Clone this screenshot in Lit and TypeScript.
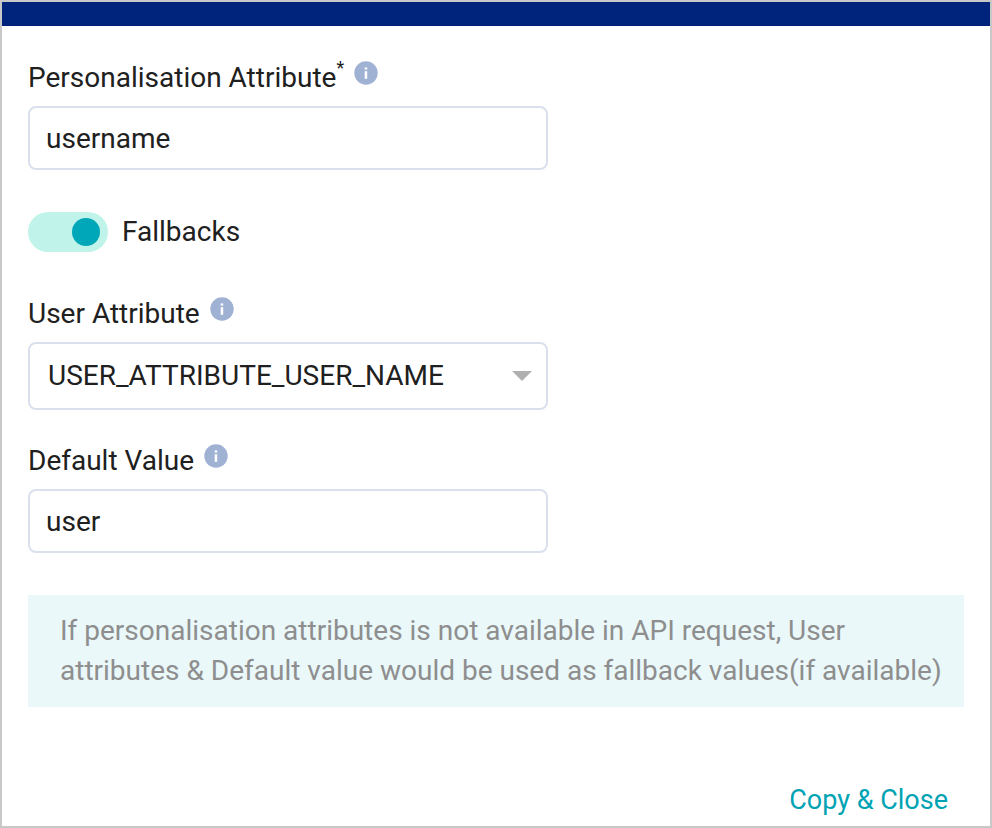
import { LitElement, html, css } from "lit";
import { customElement, property, state } from "lit/decorators.js";

@customElement("info-hint")
class InfoHint extends LitElement {
  @property() label = "";

  static styles = css`
    :host {
      display: block;
      height: 24px;
    }
    .hint {
      display: block;
      width: 24px;
      height: 24px;
      padding: 0;
      border: 0;
      background: none;
      cursor: pointer;
    }
    .icon {
      display: block;
    }
  `;

  render() {
    return html`
      <button class="hint" type="button" aria-label=${this.label}>
        <svg class="icon" width="24" height="24" viewBox="0 0 24 24" aria-hidden="true">
          <circle cx="12" cy="12" r="11.7" fill="#a0b2d4" />
          <rect x="10.7" y="6.4" width="2.5" height="2.2" fill="#fff" />
          <rect x="10.7" y="10.2" width="2.5" height="7.6" fill="#fff" />
        </svg>
      </button>
    `;
  }
}

@customElement("app-root")
class AppRoot extends LitElement {
  @state() private fallbacks = true;

  static styles = css`
    :host {
      display: flex;
      flex-direction: column;
      box-sizing: border-box;
      min-height: 100vh;
      border: 2px solid #c8c8c8;
      background: #fff;
      color: #202020;
      font-family: Roboto, "Liberation Sans", sans-serif;
      font-size: 28px;
      line-height: 40px;
    }
    .bar {
      height: 24px;
      background: #00237c;
    }
    .body {
      padding: 32px 26px 0;
    }
    .field {
      display: grid;
      gap: 8px;
      max-width: 520px;
    }
    .caption {
      display: flex;
      gap: 10px;
    }
    .caption info-hint {
      margin-top: 3px;
    }
    .star {
      font-size: 18px;
      line-height: 20px;
      vertical-align: top;
    }
    .control {
      box-sizing: border-box;
      width: 100%;
      height: 64px;
      margin: 0;
      padding: 0 16px;
      border: 2px solid #dbe0ef;
      border-radius: 8px;
      background: #fff;
      color: inherit;
      font: inherit;
      outline: none;
    }
    .picker {
      display: grid;
      align-items: center;
    }
    .picker > * {
      grid-area: 1 / 1;
    }
    .select {
      height: 68px;
      padding: 0 48px 0 18px;
      appearance: none;
    }
    .arrow {
      justify-self: end;
      margin-right: 16px;
      pointer-events: none;
    }
    .toggle {
      display: flex;
      align-items: center;
      gap: 14px;
      width: fit-content;
      margin: 42px 0;
    }
    .switch {
      display: flex;
      align-items: center;
      box-sizing: border-box;
      width: 80px;
      height: 40px;
      margin: 0;
      padding: 0 8px;
      border-radius: 20px;
      background: #e3e6ee;
      appearance: none;
    }
    .switch::before {
      content: "";
      width: 28px;
      height: 28px;
      border-radius: 50%;
      background: #98a0b3;
    }
    .switch:checked {
      justify-content: flex-end;
      background: #c0f3e9;
    }
    .switch:checked::before {
      background: #00a7b8;
    }
    .group {
      display: grid;
      gap: 31px;
    }
    .note {
      margin: 42px 0 0;
      padding: 16px 16px 16px 32px;
      background: #eaf8fa;
      color: #8e8e8e;
    }
    .footer {
      display: flex;
      justify-content: flex-end;
      margin-top: auto;
      padding: 24px 42px 6px;
    }
    .action {
      padding: 0;
      border: 0;
      background: none;
      color: #00a3b4;
      font: inherit;
      font-size: 27px;
      line-height: 40px;
      cursor: pointer;
    }
  `;

  private onToggle(e: Event) {
    this.fallbacks = (e.target as HTMLInputElement).checked;
  }

  render() {
    return html`
      <div class="bar"></div>
      <main class="body">
        <div class="field">
          <div class="caption">
            <label for="attribute">Personalisation Attribute<span class="star">*</span></label>
            <info-hint label="About personalisation attribute"></info-hint>
          </div>
          <input class="control" id="attribute" type="text" value="username" required />
        </div>

        <label class="toggle">
          <input class="switch" type="checkbox" role="switch" .checked=${this.fallbacks} @change=${this.onToggle} />
          Fallbacks
        </label>

        <div class="group">
          <div class="field">
            <div class="caption">
              <label for="user-attribute">User Attribute</label>
              <info-hint label="About user attribute"></info-hint>
            </div>
            <div class="picker">
              <select class="control select" id="user-attribute" ?disabled=${!this.fallbacks}>
                <option>USER_ATTRIBUTE_USER_NAME</option>
              </select>
              <svg class="arrow" width="20" height="10" viewBox="0 0 20 10" aria-hidden="true">
                <path d="M0 0H20L10 10Z" fill="#b0b0b0" />
              </svg>
            </div>
          </div>
          <div class="field">
            <div class="caption">
              <label for="default-value">Default Value</label>
              <info-hint label="About default value"></info-hint>
            </div>
            <input class="control" id="default-value" type="text" value="user" ?disabled=${!this.fallbacks} />
          </div>
        </div>

        <p class="note">
          If personalisation attributes is not available in API request, User attributes &amp; Default value would be
          used as fallback values(if available)
        </p>
      </main>
      <footer class="footer">
        <button class="action" type="button">Copy &amp; Close</button>
      </footer>
    `;
  }
}
